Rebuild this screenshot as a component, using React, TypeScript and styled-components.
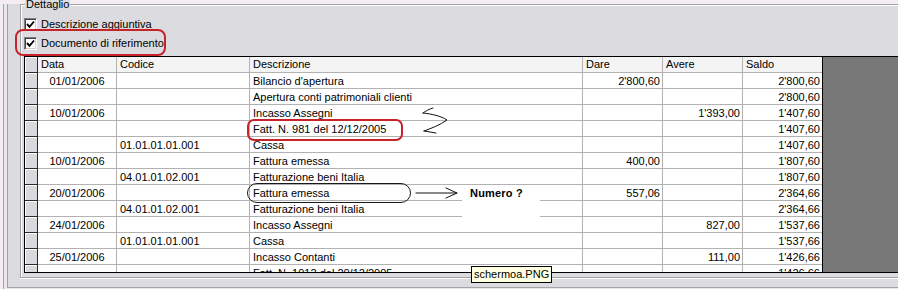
import React from "react";
import styled, { createGlobalStyle } from "styled-components";

const Global = createGlobalStyle`
  html, body { margin: 0; padding: 0; }
  body {
    background: #f4eef0;
    font-family: "Liberation Sans", Arial, sans-serif;
    font-size: 11px;
    color: #000;
    overflow: hidden;
  }
`;

const Screen = styled.div`
  position: relative;
  width: 898px;
  height: 289px;
  overflow: hidden;
  background: #f4eef0;
`;

const OuterFrame = styled.div`
  box-sizing: border-box;
  margin-left: 3px;
  height: 288px;
  padding: 0 0 3px 3px;
  background: #e9e8ed;
  border-left: 1px solid #a3a2aa;
  border-bottom: 1px solid #a3a2aa;
`;

const InnerFrame = styled.div`
  box-sizing: border-box;
  height: 284px;
  padding: 0 0 5px 12px;
  background: #dcdbe0;
  border-left: 1px solid #a3a2aa;
  border-bottom: 1px solid #a3a2aa;
`;

const GroupBox = styled.div`
  position: relative;
  box-sizing: border-box;
  margin-top: 4px;
  height: 274px;
  border: 1px solid #a0a0a6;
  border-right: none;
  box-shadow: inset 1px 1px 0 #fff, 0 1px 0 #fff;
  padding: 10px 0 0 3px;
  display: flex;
  flex-direction: column;
`;

const Legend = styled.span`
  position: absolute;
  top: -7px;
  left: 4px;
  padding: 0 1px;
  background: #dcdbe0;
  line-height: 13px;
`;

const CheckList = styled.div`
  display: flex;
  flex-direction: column;
`;

const CheckRow = styled.label`
  display: flex;
  align-items: center;
  gap: 4px;
  height: 19px;
  line-height: 13px;
`;

const CheckBox = styled.span`
  box-sizing: border-box;
  width: 13px;
  height: 13px;
  flex: none;
  display: flex;
  align-items: center;
  justify-content: center;
  background: #fff;
  border-top: 1px solid #808080;
  border-left: 1px solid #808080;
  border-bottom: 1px solid #fff;
  border-right: 1px solid #fff;
  box-shadow: inset 1px 1px 0 #404040, inset -1px -1px 0 #d4d0c8;
`;

const Grid = styled.div`
  box-sizing: border-box;
  margin-top: 3px;
  height: 217px;
  display: flex;
  overflow: hidden;
  background: #fff;
  border-top: 1px solid #000;
  border-left: 1px solid #000;
  border-bottom: 1px solid #000;
`;

const Table = styled.div`
  width: 797px;
  flex: none;
  display: flex;
  flex-direction: column;
  overflow: hidden;
`;

const Filler = styled.div`
  flex: 1;
  background: #787878;
  border-left: 1px solid #000;
`;

const Row = styled.div`
  display: flex;
  flex: none;
  height: 16px;
`;

const Indicator = styled.div`
  box-sizing: border-box;
  width: 13px;
  flex: none;
  background: #d9d8dd;
  border-right: 1px solid #2a2a2a;
  border-bottom: 1px solid #2a2a2a;
  box-shadow: inset 1px 1px 0 #fff;
`;

const Cell = styled.div<{ $w: number; $align?: "left" | "center" | "right"; $last?: boolean; $head?: boolean }>`
  box-sizing: border-box;
  width: ${(p) => p.$w}px;
  flex: none;
  padding: ${(p) => (p.$head ? "0" : "1px")} ${(p) => (p.$align === "right" ? "2px" : "3px")} 0 3px;
  text-align: ${(p) => p.$align ?? "left"};
  line-height: 15px;
  white-space: nowrap;
  overflow: hidden;
  background: ${(p) => (p.$head ? "#f4f4f4" : "#fff")};
  border-bottom: 1px solid #b2b2b2;
  border-right: ${(p) => (p.$last ? "none" : "1px solid #b2b2b2")};
`;

/* ---------- annotations drawn over the screenshot ---------- */

const RedMarkCheckbox = styled.div`
  position: absolute;
  left: 15px;
  top: 29px;
  width: 151px;
  height: 27px;
  box-sizing: border-box;
  border: 2px solid #c8232b;
  border-radius: 8px;
  pointer-events: none;
`;

const RedMarkDoc = styled.div`
  position: absolute;
  left: 247px;
  top: 119px;
  width: 156px;
  height: 22px;
  box-sizing: border-box;
  border: 2px solid #c8232b;
  border-radius: 7px;
  pointer-events: none;
`;

const InkPill = styled.div`
  position: absolute;
  left: 247px;
  top: 183px;
  width: 164px;
  height: 20px;
  box-sizing: border-box;
  border: 1px solid #1a1a1a;
  border-radius: 10px;
  pointer-events: none;
`;

const NoteCard = styled.div`
  position: absolute;
  left: 462px;
  top: 186px;
  width: 78px;
  height: 31px;
  background: #fff;
  padding: 1px 0 0 8px;
  box-sizing: border-box;
  font-weight: bold;
  font-size: 11px;
  letter-spacing: 0.2px;
  line-height: 12px;
`;

const CurlyArrows = styled.svg`
  position: absolute;
  left: 412px;
  top: 104px;
  width: 44px;
  height: 36px;
  overflow: visible;
`;

const RightArrow = styled.svg`
  position: absolute;
  left: 414px;
  top: 186px;
  width: 46px;
  height: 14px;
  overflow: visible;
`;

const Tooltip = styled.div`
  position: absolute;
  left: 471px;
  top: 266px;
  height: 17px;
  box-sizing: border-box;
  padding: 0 2px;
  background: #ffffe1;
  border: 1px solid #000;
  line-height: 15px;
  white-space: nowrap;
`;

type Line = [string, string, string, string, string, string];

const rows: Line[] = [
  ["01/01/2006", "", "Bilancio d'apertura", "2'800,60", "", "2'800,60"],
  ["", "", "Apertura conti patrimoniali clienti", "", "", "2'800,60"],
  ["10/01/2006", "", "Incasso Assegni", "", "1'393,00", "1'407,60"],
  ["", "", "Fatt. N. 981 del 12/12/2005", "", "", "1'407,60"],
  ["", "01.01.01.01.001", "Cassa", "", "", "1'407,60"],
  ["10/01/2006", "", "Fattura emessa", "400,00", "", "1'807,60"],
  ["", "04.01.01.02.001", "Fatturazione beni Italia", "", "", "1'807,60"],
  ["20/01/2006", "", "Fattura emessa", "557,06", "", "2'364,66"],
  ["", "04.01.01.02.001", "Fatturazione beni Italia", "", "", "2'364,66"],
  ["24/01/2006", "", "Incasso Assegni", "", "827,00", "1'537,66"],
  ["", "01.01.01.01.001", "Cassa", "", "", "1'537,66"],
  ["25/01/2006", "", "Incasso Contanti", "", "111,00", "1'426,66"],
  ["", "", "Fatt. N. 1012 del 20/12/2005", "", "", "1'426,66"],
];

const cols: { w: number; align: "left" | "center" | "right" }[] = [
  { w: 79, align: "center" },
  { w: 133, align: "left" },
  { w: 333, align: "left" },
  { w: 80, align: "right" },
  { w: 80, align: "right" },
  { w: 79, align: "right" },
];

const headers = ["Data", "Codice", "Descrizione", "Dare", "Avere", "Saldo"];

const Tick = () => (
  <svg width="9" height="9" viewBox="0 0 9 9">
    <polyline points="1,4 3.5,6.8 8,1.5" fill="none" stroke="#000" strokeWidth="1.9" />
  </svg>
);

export default function App() {
  return (
    <>
      <Global />
      <Screen>
        <OuterFrame>
          <InnerFrame>
            <GroupBox>
              <Legend>Dettaglio</Legend>
              <CheckList>
                <CheckRow>
                  <CheckBox>
                    <Tick />
                  </CheckBox>
                  Descrizione aggiuntiva
                </CheckRow>
                <CheckRow>
                  <CheckBox>
                    <Tick />
                  </CheckBox>
                  Documento di riferimento
                </CheckRow>
              </CheckList>
              <Grid>
                <Table>
                  <Row>
                    <Indicator />
                    {headers.map((h, i) => (
                      <Cell key={h} $w={cols[i].w} $head $last={i === 5}>
                        {h}
                      </Cell>
                    ))}
                  </Row>
                  {rows.map((r, ri) => (
                    <Row key={ri}>
                      <Indicator />
                      {r.map((v, i) => (
                        <Cell key={i} $w={cols[i].w} $align={cols[i].align} $last={i === 5}>
                          {v}
                        </Cell>
                      ))}
                    </Row>
                  ))}
                </Table>
                <Filler />
              </Grid>
            </GroupBox>
          </InnerFrame>
        </OuterFrame>

        <RedMarkCheckbox />
        <RedMarkDoc />
        <CurlyArrows viewBox="0 0 44 36">
          <g fill="none" stroke="#111" strokeWidth="1" strokeLinecap="round" strokeLinejoin="round">
            <path d="M11 9 C14 7 17 5 21 4" />
            <path d="M11 9 C20 10 29 12 35 16 C28 21 20 24 12 27" />
            <path d="M12 27 C16 28 20 28 24 29" />
          </g>
        </CurlyArrows>
        <InkPill />
        <RightArrow viewBox="0 0 46 14">
          <g fill="none" stroke="#111" strokeWidth="1" strokeLinecap="round">
            <path d="M2 7 L43 7" />
            <path d="M32 2 L43 7 L32 12" />
          </g>
        </RightArrow>
        <NoteCard>Numero ?</NoteCard>
        <Tooltip>schermoa.PNG</Tooltip>
      </Screen>
    </>
  );
}
